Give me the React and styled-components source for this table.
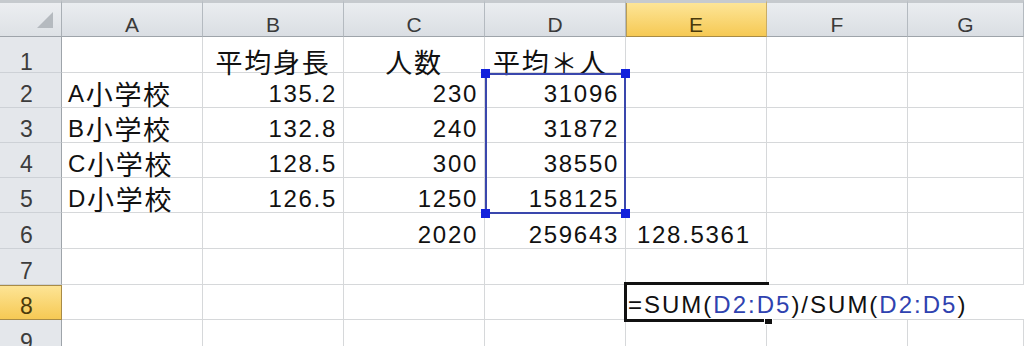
import React from 'react';
import styled, { createGlobalStyle, css } from 'styled-components';

const GlobalStyle = createGlobalStyle`
  html, body {
    margin: 0;
    padding: 0;
    background: #fff;
  }
  body {
    overflow: hidden;
    font-family: "Liberation Sans", "Noto Sans CJK JP", sans-serif;
  }
`;

const COLS = ['A', 'B', 'C', 'D', 'E', 'F', 'G'];

const Sheet = styled.div`
  display: grid;
  grid-template-columns: 62px repeat(6, 141px) 1fr;
  grid-template-rows: 37px 36px 35px 35px 35px 35px 36px 36px 35px 36px;
  width: 1024px;
  height: 346px;
  overflow: hidden;
  background: #fff;
  color: #111;
  font-size: 24px;
  letter-spacing: 1.7px;
`;

// every grid part sits on an explicit track so overlays don't shuffle the flow
const placed = css`
  grid-row: ${p => p.$row};
  grid-column: ${p => p.$col};
`;

const hot = css`
  background: linear-gradient(#fde597, #f6c954);
  color: #4a3a0c;
`;

const Corner = styled.div`
  grid-row: 1;
  grid-column: 1;
  border-top: 3px solid #c6cace;
  border-right: 1px solid #a9afb5;
  border-bottom: 1px solid #9ea4aa;
  background: linear-gradient(#eceef1, #dde1e5);
  display: flex;
  align-items: flex-end;
  justify-content: flex-end;
  padding: 0 8px 8px 0;
`;

const ColHead = styled.div`
  ${placed}
  border-top: 3px solid #c6cace;
  border-right: 1px solid #b4bac0;
  border-bottom: 1px solid #9ea4aa;
  background: linear-gradient(#eaedf0, #dadee3);
  display: flex;
  align-items: flex-end;
  justify-content: center;
  padding-bottom: 1px;
  font-size: 21px;
  line-height: 20px;
  letter-spacing: 0;
  color: #3a3a3a;
  ${p => p.$active && css`
    ${hot}
    border-bottom-color: #a88b46;
    border-right-color: #c9ad66;
    box-shadow: inset 1px 0 0 #b89c55;
  `}
`;

const RowHead = styled.div`
  ${placed}
  border-right: 1px solid #9ea4aa;
  border-bottom: 1px solid #cdd1d6;
  background: #e4e7eb;
  display: flex;
  align-items: flex-end;
  justify-content: center;
  padding: 0 8px ${p => (p.$first ? 0 : 3)}px 0;
  font-size: 23px;
  line-height: 20px;
  letter-spacing: 0;
  color: #3c3c3c;
  ${p => p.$active && css`
    ${hot}
    border-right-color: #a88b46;
    border-bottom-color: #a88b46;
    box-shadow: inset 0 1px 0 #a88b46;
  `}
`;

const justify = { left: 'flex-start', right: 'flex-end', center: 'center' };

const Cell = styled.div`
  ${placed}
  border-right: 1px solid #d6d8da;
  border-bottom: 1px solid #d6d8da;
  display: flex;
  align-items: flex-end;
  justify-content: ${p => justify[p.$align || 'left']};
  padding: 0 6px ${p => (p.$first ? 0 : 3)}px ${p => p.$indent ?? 6}px;
  line-height: 20px;
  white-space: nowrap;
  min-width: 0;
`;

const Kanji = styled.span`
  font-family: "Noto Sans CJK JP", sans-serif;
  font-size: 27px;
`;

const Ref = styled.span`
  color: #2f42b0;
`;

// range D2:D5 outline with its corner grips
const Selection = styled.div`
  grid-area: 3 / 5 / 7 / 6;
  position: relative;
  margin: 0 0 -1px 0;
  border: 2px solid #3a47ad;
  pointer-events: none;
  z-index: 2;
`;

const Grip = styled.span`
  position: absolute;
  width: 9px;
  height: 9px;
  background: #1322dc;
  ${p => (p.$top ? 'top: -6px;' : 'bottom: -6px;')}
  ${p => (p.$left ? 'left: -6px;' : 'right: -6px;')}
`;

// in-cell editor for E8, spilling over F8:G8
const Editor = styled.div`
  grid-area: 9 / 6 / 10 / -1;
  margin-bottom: 1px;
  background: #fff;
  display: flex;
  align-items: flex-end;
  padding: 0 0 4px 2px;
  line-height: 20px;
  letter-spacing: 2px;
  white-space: nowrap;
  z-index: 3;
`;

const ActiveCell = styled.div`
  grid-area: 9 / 6 / 10 / 7;
  position: relative;
  margin: -3px -2px -2px -2px;
  border: 3px solid #111;
  border-right: none;
  pointer-events: none;
  z-index: 4;
`;

const FillHandle = styled.span`
  position: absolute;
  right: -4px;
  bottom: -6px;
  width: 7px;
  height: 5px;
  background: #111;
  border: 1px solid #fff;
`;

const SelectAll = () => (
  <svg width="16" height="16" viewBox="0 0 16 16">
    <polygon points="16,0 16,16 0,16" fill="#b5babf" />
  </svg>
);

const rows = [
  [null, { v: '平均身長', a: 'center' }, { v: '人数', a: 'center' }, { v: '平均＊人', i: 8 }, null, null, null],
  ['A小学校', '135.2', '230', '31096', null, null, null],
  ['B小学校', '132.8', '240', '31872', null, null, null],
  ['C小学校', '128.5', '300', '38550', null, null, null],
  ['D小学校', '126.5', '1250', '158125', null, null, null],
  [null, null, '2020', '259643', { v: '128.5361', i: 11 }, null, null],
  [null, null, null, null, null, null, null],
  [null, null, null, null, null, null, null],
  [null, null, null, null, null, null, null],
];

const withKanji = text =>
  text.split(/([\u3000-\u9fff\uff00-\uffef]+)/).map((part, i) =>
    /[\u3000-\u9fff\uff00-\uffef]/.test(part) ? <Kanji key={i}>{part}</Kanji> : part
  );

const toCell = value => {
  if (value == null) return { v: '' };
  if (typeof value === 'string') {
    return { v: value, a: /^[\d.]+$/.test(value) ? 'right' : 'left' };
  }
  return value;
};

export default function App() {
  return (
    <>
      <GlobalStyle />
      <Sheet>
        <Corner>
          <SelectAll />
        </Corner>
        {COLS.map((c, i) => (
          <ColHead key={c} $row={1} $col={i + 2} $active={c === 'E'}>{c}</ColHead>
        ))}
        {rows.map((row, r) => (
          <React.Fragment key={r}>
            <RowHead $row={r + 2} $col={1} $first={r === 0} $active={r === 7}>{r + 1}</RowHead>
            {row.map((value, c) => {
              const cell = toCell(value);
              return (
                <Cell
                  key={c}
                  $row={r + 2}
                  $col={c + 2}
                  $first={r === 0}
                  $align={cell.a}
                  $indent={cell.i}
                >
                  {withKanji(cell.v)}
                </Cell>
              );
            })}
          </React.Fragment>
        ))}
        <Selection>
          <Grip $top $left />
          <Grip $top />
          <Grip $left />
          <Grip />
        </Selection>
        <Editor>
          =SUM(<Ref>D2:D5</Ref>)/SUM(<Ref>D2:D5</Ref>)
        </Editor>
        <ActiveCell>
          <FillHandle />
        </ActiveCell>
      </Sheet>
    </>
  );
}
